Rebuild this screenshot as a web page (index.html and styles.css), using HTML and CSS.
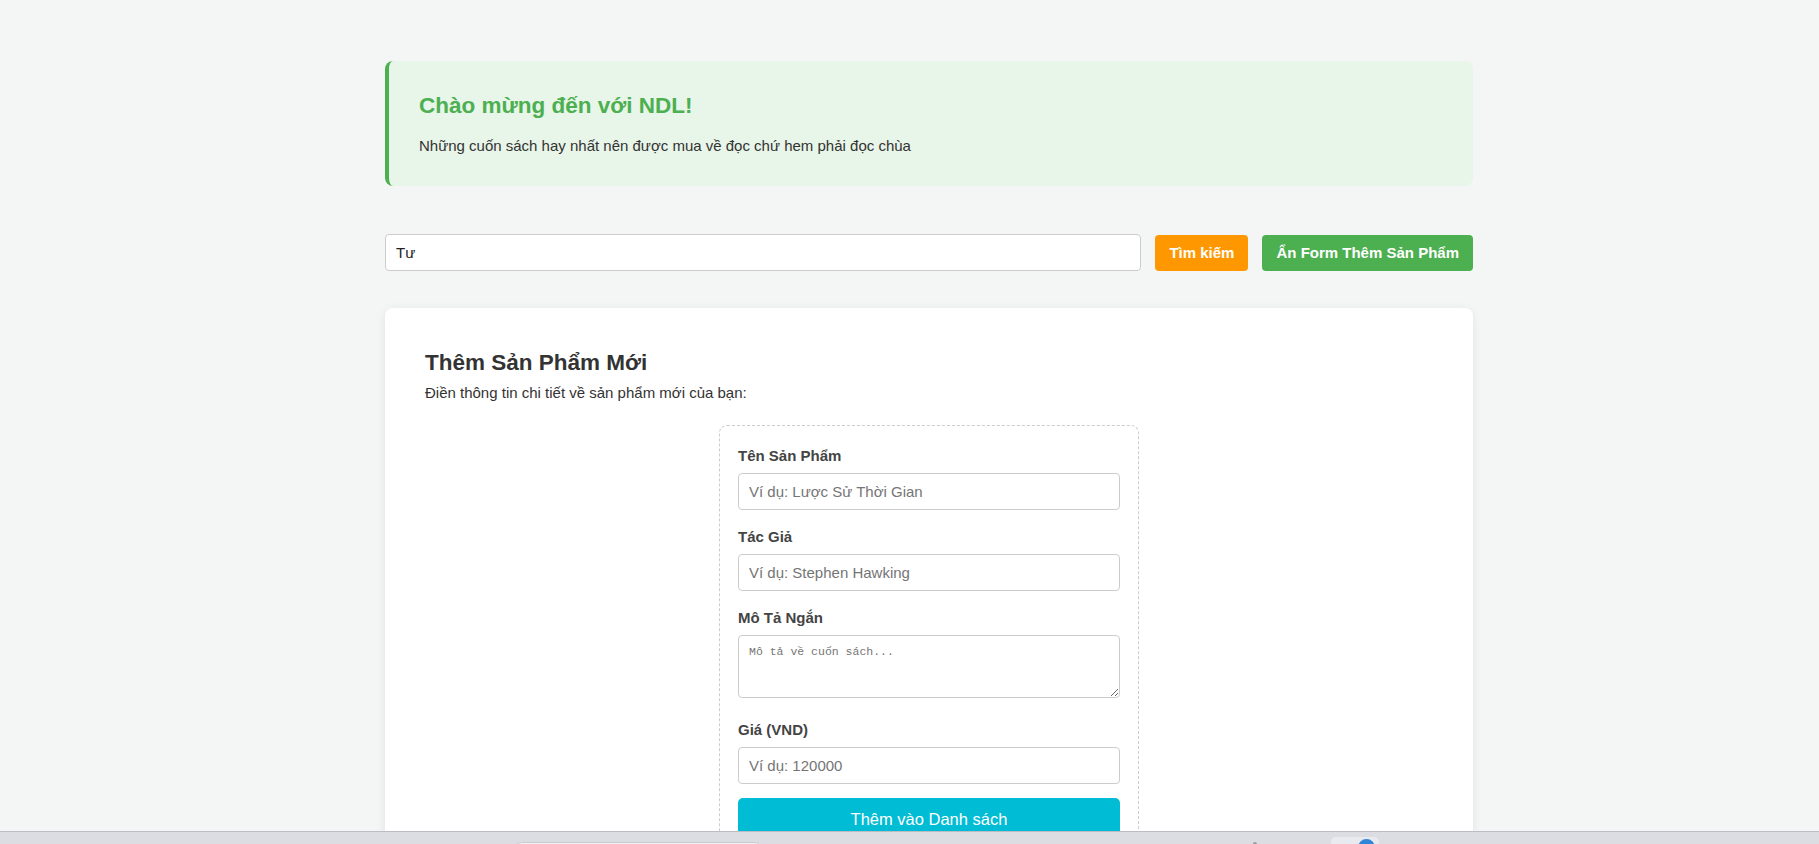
FILE: index.html
```html
<!DOCTYPE html>
<html lang="vi">
<head>
<meta charset="utf-8">
<title>NDL</title>
<link rel="stylesheet" href="styles.css">
</head>
<body>
<div class="page">
  <section class="banner">
    <h2 class="banner-title">Chào mừng đến với NDL!</h2>
    <p class="banner-text">Những cuốn sách hay nhất nên được mua về đọc chứ hem phải đọc chùa</p>
  </section>

  <div class="search-row">
    <input class="search-input" type="text" value="Tư">
    <button class="btn btn-orange" type="button">Tìm kiếm</button>
    <button class="btn btn-green" type="button">Ẩn Form Thêm Sản Phẩm</button>
  </div>

  <section class="card">
    <h2 class="card-title">Thêm Sản Phẩm Mới</h2>
    <p class="card-text">Điền thông tin chi tiết về sản phẩm mới của bạn:</p>
    <form class="form-box">
      <div class="group">
        <label class="label">Tên Sản Phẩm</label>
        <input class="field" type="text" placeholder="Ví dụ: Lược Sử Thời Gian">
      </div>
      <div class="group">
        <label class="label">Tác Giả</label>
        <input class="field" type="text" placeholder="Ví dụ: Stephen Hawking">
      </div>
      <div class="group group-area">
        <label class="label">Mô Tả Ngắn</label>
        <textarea class="area" placeholder="Mô tả về cuốn sách..."></textarea>
      </div>
      <div class="group group-last">
        <label class="label">Giá (VND)</label>
        <input class="field" type="text" placeholder="Ví dụ: 120000">
      </div>
      <button class="submit" type="button">Thêm vào Danh sách</button>
    </form>
  </section>
</div>

<div class="taskbar">
  <div class="tb-search"></div>
  <div class="tb-dot"></div>
  <div class="tb-app"><span class="tb-app-icon"></span></div>
</div>
</body>
</html>
```

FILE: styles.css
```css
html {
  overflow: hidden;
}

body {
  margin: 0;
  background: #f4f6f5;
  font-family: "Liberation Sans", Arial, sans-serif;
  color: #333;
}

.page {
  width: 1088px;
  margin: 61px 0 0 385px;
}

.banner {
  background: #e8f5e9;
  border-left: 4px solid #4caf50;
  border-radius: 8px;
  padding: 32px 30px 28px 30px;
  margin-bottom: 48px;
}

.banner-title {
  margin: 0 0 15px 0;
  font-size: 22.5px;
  font-weight: bold;
  color: #4caf50;
}

.banner-text {
  margin: 0;
  font-size: 15px;
  line-height: 24px;
  color: #333;
}

.search-row {
  display: flex;
  align-items: center;
  gap: 14px;
  margin-bottom: 37px;
}

.search-input {
  flex: 1;
  min-width: 0;
  box-sizing: border-box;
  font-family: "Liberation Sans", Arial, sans-serif;
  font-size: 15px;
  padding: 9px 10px;
  border: 1px solid #ccc;
  border-radius: 4px;
  background: #fff;
  color: #222;
  outline: none;
}

.btn {
  font-family: "Liberation Sans", Arial, sans-serif;
  font-size: 15px;
  font-weight: bold;
  line-height: 18px;
  padding: 9px 14px;
  border: none;
  border-radius: 4px;
  color: #fff;
  white-space: nowrap;
}

.btn-orange {
  background: #ff9800;
}

.btn-green {
  background: #4caf50;
}

.card {
  background: #fff;
  border-radius: 8px;
  box-shadow: 0 2px 10px rgba(0, 0, 0, 0.08);
  padding: 42px 40px 40px 40px;
}

.card-title {
  margin: 0 0 8px 0;
  font-size: 22.5px;
  font-weight: bold;
  color: #333;
}

.card-text {
  margin: 0 0 24px 0;
  font-size: 15px;
  color: #333;
}

.form-box {
  max-width: 420px;
  box-sizing: border-box;
  margin: 0 auto;
  border: 1px dashed #ccc;
  border-radius: 8px;
  padding: 21px 18px 20px 18px;
}

.group {
  margin-bottom: 18px;
}

.group-area {
  margin-bottom: 23px;
}

.group-last {
  margin-bottom: 14px;
}

.label {
  display: block;
  margin-bottom: 9px;
  font-size: 15px;
  font-weight: bold;
  color: #444;
}

.field {
  display: block;
  width: 100%;
  box-sizing: border-box;
  font-family: "Liberation Sans", Arial, sans-serif;
  font-size: 15px;
  padding: 9px 10px;
  border: 1px solid #ccc;
  border-radius: 4px;
  background: #fff;
  color: #222;
}

.field::placeholder {
  color: #757575;
}

.area {
  display: block;
  width: 100%;
  height: 63px;
  box-sizing: border-box;
  font-family: "Liberation Mono", "DejaVu Sans Mono", monospace;
  font-size: 11.5px;
  padding: 9px 10px;
  border: 1px solid #ccc;
  border-radius: 4px;
  background: #fff;
}

.area::placeholder {
  color: #757575;
}

.submit {
  display: block;
  width: 100%;
  font-family: "Liberation Sans", Arial, sans-serif;
  font-size: 16.5px;
  line-height: 19px;
  padding: 12px;
  border: none;
  border-radius: 5px;
  background: #00bcd4;
  color: #fff;
}

.taskbar {
  position: fixed;
  left: 0;
  right: 0;
  bottom: 0;
  height: 12px;
  background: #dcdde3;
  border-top: 1px solid #bcbdc2;
}

.tb-search {
  position: absolute;
  left: 512px;
  top: 10px;
  width: 250px;
  height: 20px;
  background: #f4f4f6;
  border: 1px solid #c9cad0;
  border-radius: 10px;
}

.tb-dot {
  position: absolute;
  left: 1253px;
  top: 10px;
  width: 4px;
  height: 4px;
  border-radius: 50%;
  background: #9a9ba0;
}

.tb-app {
  position: absolute;
  left: 1331px;
  top: 5px;
  width: 48px;
  height: 30px;
  background: #e9eaef;
  border-radius: 5px;
}

.tb-app-icon {
  position: absolute;
  left: 27px;
  top: 2px;
  width: 17px;
  height: 17px;
  border-radius: 50%;
  background: #2f86d8;
}
```
